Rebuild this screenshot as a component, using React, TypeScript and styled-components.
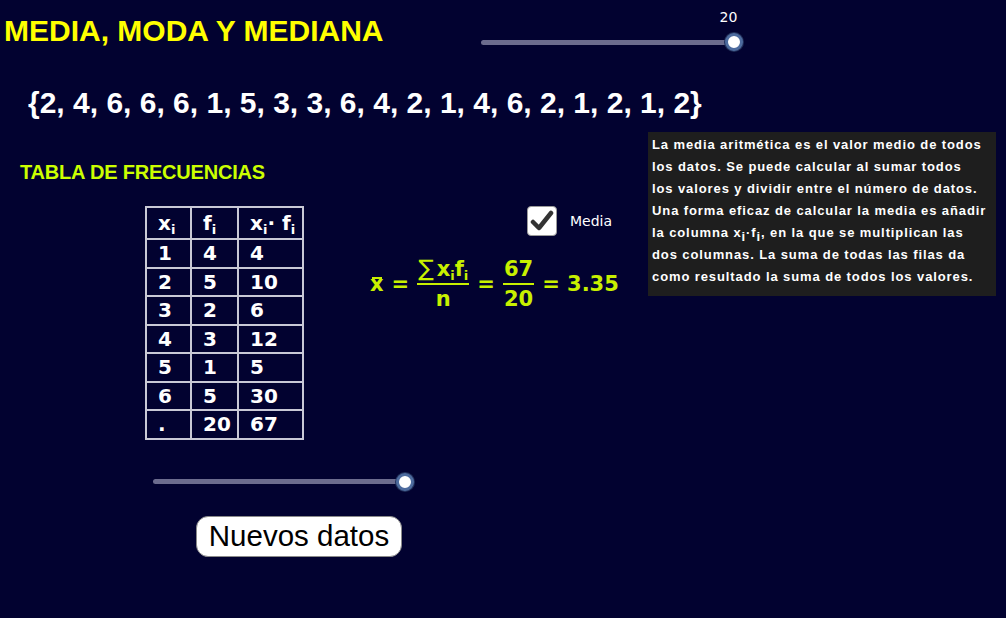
import React from 'react'
import styled, { createGlobalStyle } from 'styled-components'

const GlobalStyle = createGlobalStyle`
  html, body {
    margin: 0;
    padding: 0;
    background: #020230;
  }
  body {
    font-family: "Liberation Sans", Arial, sans-serif;
  }
`

const Page = styled.div`
  width: 1006px;
  height: 618px;
  background: #020230;
  color: #ffffff;
  overflow: hidden;
`

const Header = styled.header`
  display: flex;
  align-items: flex-start;
  height: 62px;
  padding-left: 4px;
`

const Title = styled.h1`
  margin: 14px 0 0;
  font-size: 30px;
  line-height: 34px;
  font-weight: bold;
  color: #ffff00;
  white-space: nowrap;
`

const SliderBlock = styled.div<{ $left: number; $width: number }>`
  display: flex;
  flex-direction: column;
  margin-left: ${(p) => p.$left}px;
  width: ${(p) => p.$width + 9}px;
`

const SliderValue = styled.div`
  align-self: flex-end;
  margin-top: 8px;
  margin-right: 4px;
  width: 22px;
  text-align: center;
  font-family: "DejaVu Sans", sans-serif;
  font-size: 14px;
  line-height: 18px;
  color: #ffffff;
`

const SliderRow = styled.div<{ $width: number }>`
  position: relative;
  height: 18px;
  width: ${(p) => p.$width}px;
  display: flex;
  align-items: center;
`

const Track = styled.div`
  flex: 1;
  height: 5px;
  border-radius: 3px;
  background: #6c6c8e;
`

const Knob = styled.div`
  position: absolute;
  right: -9px;
  top: 0;
  width: 12px;
  height: 12px;
  border-radius: 50%;
  background: #ffffff;
  border: 3px solid #4d6b9e;
  box-shadow: 0 0 0 1px #22305a;
`

const DataSet = styled.div`
  margin: 24px 0 0 28px;
  font-size: 30px;
  line-height: 34px;
  font-weight: bold;
  color: #ffffff;
  white-space: nowrap;
`

const Main = styled.main`
  display: grid;
  grid-template-columns: 370px 278px 348px;
  align-items: start;
  margin-top: 12px;
`

const LeftCol = styled.section`
  display: flex;
  flex-direction: column;
  align-items: flex-start;
`

const SectionTitle = styled.h2`
  margin: 28px 0 0 20px;
  font-size: 20px;
  line-height: 24px;
  font-weight: bold;
  color: #ccff00;
  letter-spacing: -0.2px;
`

const Table = styled.table`
  margin: 22px 0 0 145px;
  border-collapse: collapse;
  font-family: "DejaVu Sans", sans-serif;
  font-weight: bold;
  font-size: 20px;
  color: #ffffff;
`

const Cell = styled.td<{ $w: number; $head?: boolean }>`
  border: 2px solid #c9c9d6;
  width: ${(p) => p.$w}px;
  height: ${(p) => (p.$head ? 32 : 28.5)}px;
  padding: 0 0 0 11px;
  box-sizing: border-box;
  line-height: 20px;
  text-align: left;
`

const Sub = styled.sub`
  font-size: 13px;
  vertical-align: -4px;
  line-height: 0;
`

const BottomSlider = styled.div`
  margin: 33px 0 0 153px;
`

const Button = styled.button`
  margin: 25px 0 0 196px;
  width: 206px;
  height: 41px;
  border-radius: 12px;
  border: 1px solid #8a8a8a;
  background: #ffffff;
  color: #000000;
  font-family: "Liberation Sans", Arial, sans-serif;
  font-size: 29.5px;
  line-height: 30px;
  padding: 0;
`

const MidCol = styled.section`
  display: flex;
  flex-direction: column;
  align-items: flex-start;
`

const CheckRow = styled.label`
  display: flex;
  align-items: center;
  gap: 13px;
  margin: 74px 0 0 157px;
  font-family: "DejaVu Sans", sans-serif;
  font-size: 14px;
  color: #ffffff;
`

const CheckBox = styled.span`
  display: flex;
  align-items: center;
  justify-content: center;
  width: 30px;
  height: 30px;
  border-radius: 4px;
  background: #ffffff;
  border: 1px solid #9a9a9a;
  box-sizing: border-box;
`

const Formula = styled.div`
  display: flex;
  align-items: center;
  gap: 8px;
  margin-top: 20px;
  font-family: "DejaVu Sans", sans-serif;
  font-weight: bold;
  font-size: 21px;
  color: #c8f000;
  white-space: nowrap;
`

const Fraction = styled.span`
  display: inline-flex;
  flex-direction: column;
  align-items: center;
`

const Numerator = styled.span`
  padding: 0 1px 2px;
  line-height: 24px;
`

const Denominator = styled.span`
  padding-top: 2px;
  line-height: 24px;
`

const Bar = styled.span`
  align-self: stretch;
  height: 2px;
  background: #c8f000;
`

const Sigma = styled.span`
  font-weight: normal;
  font-size: 23px;
  margin-right: 3px;
`

const XBar = styled.span`
  position: relative;
  &::before {
    content: '';
    position: absolute;
    left: 2px;
    right: 2px;
    top: 5px;
    height: 2px;
    background: #c8f000;
  }
`

const InfoBox = styled.aside`
  width: 348px;
  height: 164px;
  box-sizing: border-box;
  padding: 2px 4px;
  background: #1e1e1e;
  color: #ffffff;
  font-family: "Liberation Sans", Arial, sans-serif;
  font-weight: bold;
  font-size: 13px;
  line-height: 22px;
  letter-spacing: 0.9px;
  white-space: nowrap;
`

const data = [2, 4, 6, 6, 6, 1, 5, 3, 3, 6, 4, 2, 1, 4, 6, 2, 1, 2, 1, 2]

const rows = [
  ['1', '4', '4'],
  ['2', '5', '10'],
  ['3', '2', '6'],
  ['4', '3', '12'],
  ['5', '1', '5'],
  ['6', '5', '30'],
  ['.', '20', '67'],
]

const widths = [45, 47, 65]

const Slider = ({ width }: { width: number }) => (
  <SliderRow $width={width}>
    <Track />
    <Knob />
  </SliderRow>
)

export default function App() {
  return (
    <Page>
      <GlobalStyle />
      <Header>
        <Title>MEDIA, MODA Y MEDIANA</Title>
        <SliderBlock $left={98} $width={253}>
          <SliderValue>20</SliderValue>
          <div style={{ height: 7 }} />
          <Slider width={253} />
        </SliderBlock>
      </Header>

      <DataSet>{'{' + data.join(', ') + '}'}</DataSet>

      <Main>
        <LeftCol>
          <SectionTitle>TABLA DE FRECUENCIAS</SectionTitle>
          <Table>
            <tbody>
              <tr>
                <Cell $w={widths[0]} $head>
                  x<Sub>i</Sub>
                </Cell>
                <Cell $w={widths[1]} $head>
                  f<Sub>i</Sub>
                </Cell>
                <Cell $w={widths[2]} $head>
                  x<Sub>i</Sub>· f<Sub>i</Sub>
                </Cell>
              </tr>
              {rows.map((r, i) => (
                <tr key={i}>
                  {r.map((v, j) => (
                    <Cell key={j} $w={widths[j]}>
                      {v}
                    </Cell>
                  ))}
                </tr>
              ))}
            </tbody>
          </Table>
          <BottomSlider>
            <Slider width={252} />
          </BottomSlider>
          <Button>Nuevos datos</Button>
        </LeftCol>

        <MidCol>
          <CheckRow>
            <CheckBox>
              <svg width="24" height="22" viewBox="0 0 24 22">
                <path
                  d="M3 12 L9 18 L21 3"
                  fill="none"
                  stroke="#333333"
                  strokeWidth="4.5"
                  strokeLinecap="round"
                  strokeLinejoin="round"
                />
              </svg>
            </CheckBox>
            Media
          </CheckRow>
          <Formula>
            <XBar>x</XBar>
            <span>=</span>
            <Fraction>
              <Numerator>
                <Sigma>∑</Sigma>x<Sub>i</Sub>f<Sub>i</Sub>
              </Numerator>
              <Bar />
              <Denominator>n</Denominator>
            </Fraction>
            <span>=</span>
            <Fraction>
              <Numerator>67</Numerator>
              <Bar />
              <Denominator>20</Denominator>
            </Fraction>
            <span>= 3.35</span>
          </Formula>
        </MidCol>

        <InfoBox>
          La media aritmética es el valor medio de todos
          <br />
          los datos. Se puede calcular al sumar todos
          <br />
          los valores y dividir entre el número de datos.
          <br />
          Una forma eficaz de calcular la media es añadir
          <br />
          la columna x<Sub>i</Sub>·f<Sub>i</Sub>, en la que se multiplican las
          <br />
          dos columnas. La suma de todas las filas da
          <br />
          como resultado la suma de todos los valores.
        </InfoBox>
      </Main>
    </Page>
  )
}
